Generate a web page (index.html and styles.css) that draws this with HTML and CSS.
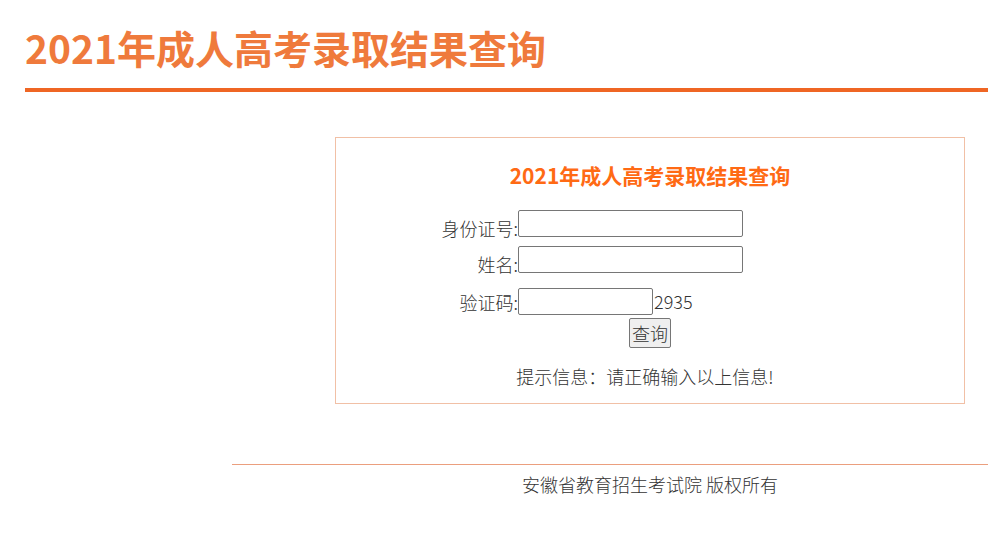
FILE: index.html
```html
<!DOCTYPE html>
<html lang="zh-CN">
<head>
<meta charset="utf-8">
<title>2021年成人高考录取结果查询</title>
<link rel="stylesheet" href="styles.css">
</head>
<body>
<div class="header">
  <h1 class="site-title">2021年成人高考录取结果查询</h1>
  <div class="header-line"></div>
</div>
<div class="box">
  <h2 class="box-title">2021年成人高考录取结果查询</h2>
  <form class="form">
    <div class="row row-top">
      <label class="label">身份证号:</label>
      <input class="input input-long" type="text">
    </div>
    <div class="row row-top row-name">
      <label class="label">姓名:</label>
      <input class="input input-long" type="text">
    </div>
    <div class="row row-code">
      <label class="label">验证码:</label>
      <input class="input input-short" type="text">
      <span class="code">2935</span>
    </div>
    <div class="btn-row">
      <button class="btn" type="button">查询</button>
    </div>
    <p class="hint">提示信息：请正确输入以上信息!</p>
  </form>
</div>
<div class="footer">
  <p class="footer-text">安徽省教育招生考试院 版权所有</p>
</div>
</body>
</html>
```
FILE: styles.css
```css
html, body {
  margin: 0;
  padding: 0;
  background: #ffffff;
}
body {
  font-family: "Noto Sans CJK SC", "Noto Sans", sans-serif;
  font-weight: 300;
  color: #333333;
  width: 988px;
}
.header {
  margin-left: 25px;
  padding-top: 19px;
}
.site-title {
  margin: 0;
  font-size: 39px;
  line-height: 56px;
  font-weight: bold;
  color: #ef7a3c;
}
.header-line {
  margin-top: 13px;
  height: 4px;
  background: #ef6624;
}
.box {
  margin-top: 45px;
  margin-left: 335px;
  width: 628px;
  border: 1px solid #f1c0a6;
  padding-bottom: 15px;
}
.box-title {
  margin: 22px 0 0 0;
  text-align: center;
  font-size: 21px;
  line-height: 30px;
  font-weight: bold;
  color: #ff6a14;
}
.form {
  margin: 0;
}
.row {
  display: flex;
  height: 27px;
}
.row-top {
  align-items: flex-end;
  margin-top: 20px;
}
.row-name {
  margin-top: 9px;
}
.row-code {
  align-items: center;
  margin-top: 15px;
}
.label {
  width: 182px;
  text-align: right;
  font-size: 18px;
  line-height: 18px;
  flex-shrink: 0;
}
.input {
  box-sizing: border-box;
  height: 27px;
  border: 1px solid #767676;
  border-radius: 2px;
  padding: 0 2px;
  margin: 0;
  background: #fff;
  font-size: 14px;
}
.input-long {
  width: 225px;
}
.input-short {
  width: 135px;
}
.code {
  font-size: 18px;
  line-height: 27px;
  margin-left: 1px;
}
.btn-row {
  display: flex;
  justify-content: center;
  margin-top: 3px;
}
.btn {
  box-sizing: border-box;
  width: 42px;
  height: 30px;
  padding: 0;
  margin: 0;
  font-family: "Noto Sans CJK SC", sans-serif;
  font-weight: 300;
  font-size: 18px;
  line-height: 26px;
  color: #333;
  background: #efefef;
  border: 1px solid #767676;
  border-radius: 2px;
}
.hint {
  margin: 16px 0 0 0;
  text-align: center;
  font-size: 18px;
  line-height: 24px;
  padding-right: 10px;
}
.footer {
  margin-top: 60px;
  margin-left: 232px;
  border-top: 1px solid #eb9f7e;
}
.footer-text {
  margin: 7px 0 0 0;
  padding-left: 80px;
  text-align: center;
  font-size: 18px;
  line-height: 24px;
}
```
